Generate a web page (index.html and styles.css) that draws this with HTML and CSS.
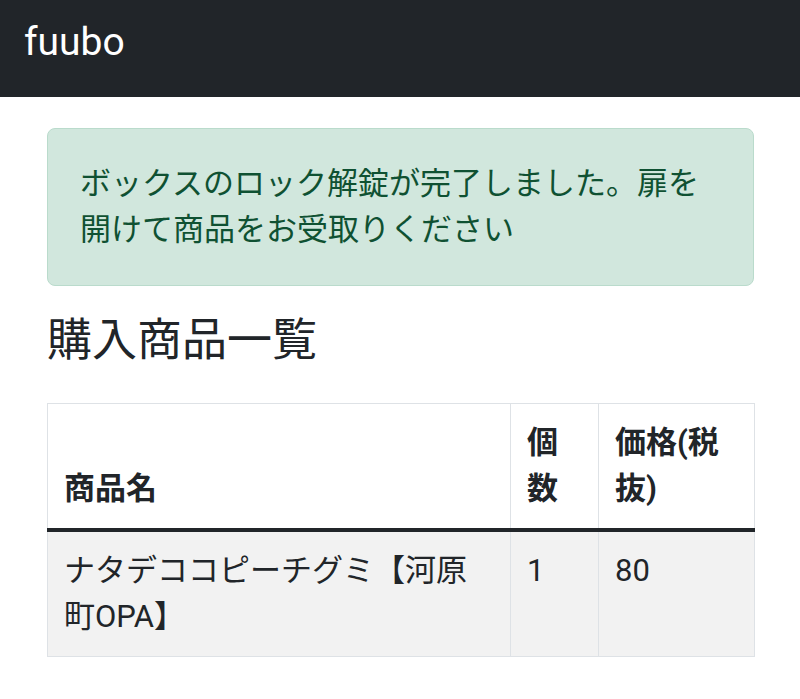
FILE: index.html
```html
<!DOCTYPE html>
<html lang="ja">
<head>
<meta charset="utf-8">
<title>fuubo</title>
<link rel="stylesheet" href="styles.css">
</head>
<body>
<nav class="navbar"><span class="brand">fuubo</span></nav>
<main class="container">
  <div class="alert">ボックスのロック解錠が完了しました。扉を開けて商品をお受取りください</div>
  <h3 class="title">購入商品一覧</h3>
  <table class="items">
    <colgroup><col class="c-name"><col class="c-qty"><col class="c-price"></colgroup>
    <thead>
      <tr><th>商品名</th><th>個数</th><th>価格(税抜)</th></tr>
    </thead>
    <tbody>
      <tr><td>ナタデココピーチグミ【河原町OPA】</td><td>1</td><td>80</td></tr>
    </tbody>
  </table>
</main>
</body>
</html>
```
FILE: styles.css
```css
* { box-sizing: border-box; }
body {
  margin: 0;
  font-family: Roboto, "Noto Sans CJK JP", sans-serif;
  font-size: 31px;
  line-height: 46px;
  color: #212529;
  background: #fff;
}
.navbar {
  height: 97px;
  background: #212529;
  padding: 13px 0 0 24px;
}
.brand {
  display: block;
  color: #fff;
  font-size: 39px;
  line-height: 58px;
}
.container {
  padding: 31px 46px 0 47px;
}
.alert {
  background: #d1e7dd;
  border: 1px solid #badbcc;
  color: #0f5132;
  border-radius: 8px;
  padding: 32px;
  margin-bottom: 28px;
}
.title {
  margin: 0 0 35px;
  font-size: 45px;
  line-height: 54px;
  font-weight: 400;
}
.items {
  width: 100%;
  border-collapse: collapse;
  table-layout: fixed;
}
.c-name { width: 463px; }
.c-qty { width: 88px; }
.c-price { width: 156px; }
.items th, .items td {
  border: 1px solid #dee2e6;
  padding: 16px;
  text-align: left;
}
.items th {
  vertical-align: bottom;
  font-weight: 700;
  border-bottom: 4px solid #212529;
}
.items td {
  vertical-align: top;
  background: #f2f2f2;
}
```
